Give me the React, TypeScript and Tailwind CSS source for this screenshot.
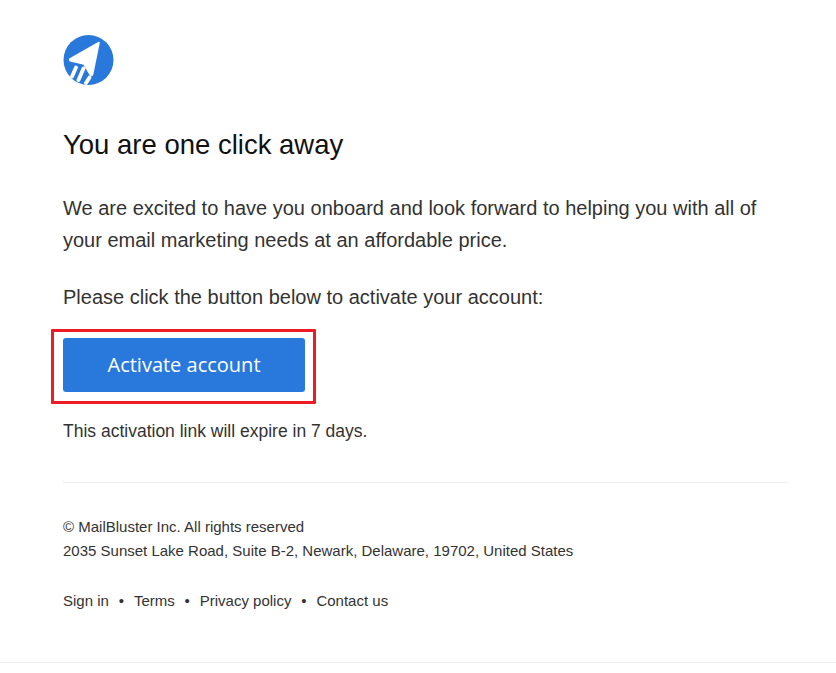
export default function App() {
  return (
    <div className="min-h-[673px] bg-white overflow-hidden font-['Liberation_Sans',Arial,sans-serif]">
      <div className="h-[663px] border-b border-[#eeeeee] pl-[63px] pr-[48px] pt-[35px]">
        <svg width="51" height="50" viewBox="0 0 51 50" className="block">
          <circle cx="25.5" cy="25" r="25" fill="#2979dc" />
          <path d="M36 7.5 L7 24 Q6 25.5 8 26 L21 29 L27.5 40 Q28.5 41 29.5 39.5 Z" fill="#fff" stroke="#fff" strokeWidth="1.6" strokeLinejoin="round" />
          <path d="M13 32.5 L9 41.5 M20.5 33.5 L15.5 45 M26.5 42.5 L23 48" stroke="#fff" strokeWidth="3.8" strokeLinecap="round" fill="none" />
        </svg>
        <h1 className="mt-[42px] text-[27.5px] leading-[36px] font-normal text-[#111111]">You are one click away</h1>
        <p className="mt-[29px] text-[20px] leading-[32px] text-[#333333]">
          We are excited to have you onboard and look forward to helping you with all of your email marketing needs at an affordable price.
        </p>
        <p className="mt-[25px] text-[20px] leading-[32px] text-[#333333]">Please click the button below to activate your account:</p>
        <div className="relative mt-[25px] w-[242px]">
          <a className="flex h-[54px] w-[242px] items-center justify-center rounded-[3px] bg-[#2979dc] font-['Open_Sans',sans-serif] text-[20px] text-white">Activate account</a>
          <div className="absolute left-[-12px] top-[-9px] h-[75px] w-[265px] rounded-[1px] border-[3px] border-[#ed1c24]" />
        </div>
        <p className="mt-[25px] text-[17.5px] leading-[28px] text-[#333333]">This activation link will expire in 7 days.</p>
        <hr className="mt-[37px] border-0 border-t border-[#eeeeee]" />
        <p className="mt-[32px] text-[15px] leading-[24px] text-[#333333]">© MailBluster Inc. All rights reserved</p>
        <p className="text-[15px] leading-[24px] text-[#333333]">2035 Sunset Lake Road, Suite B-2, Newark, Delaware, 19702, United States</p>
        <div className="mt-[26px] flex text-[15px] leading-[24px] text-[#333333]">
          <span>Sign in</span>
          <span className="w-[25px] text-center">•</span>
          <span>Terms</span>
          <span className="w-[25px] text-center">•</span>
          <span>Privacy policy</span>
          <span className="w-[25px] text-center">•</span>
          <span>Contact us</span>
        </div>
      </div>
    </div>
  );
}
